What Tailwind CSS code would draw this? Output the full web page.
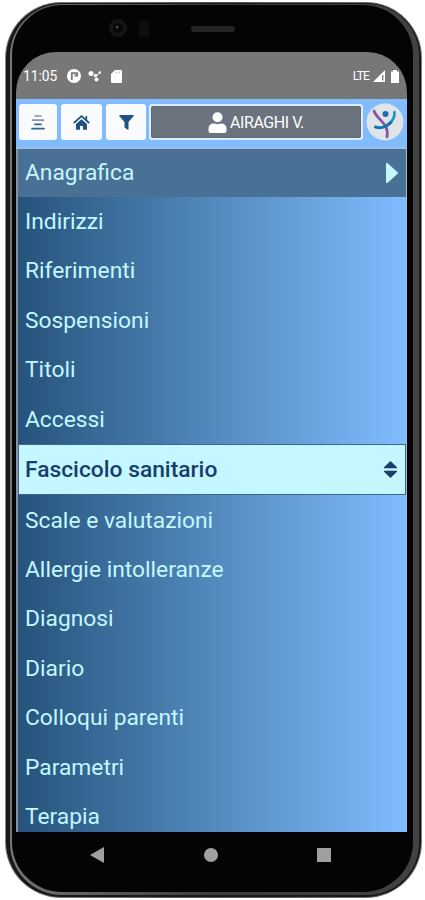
<!DOCTYPE html>
<html lang="it">
<head>
    <meta charset="UTF-8">
    <meta name="viewport" content="width=device-width, initial-scale=1.0">
    <title>Fascicolo sanitario</title>
    <script src="https://cdn.jsdelivr.net/npm/@tailwindcss/browser@4"></script>
</head>
<body class="bg-white font-['Roboto',sans-serif]">

<div class="w-[425px] h-[900px] pl-[5px] pr-[3px] pt-[2px] pb-[2px] overflow-hidden">
    <!-- phone shell -->
    <div class="h-full rounded-[56px] bg-linear-to-r from-[#858585] via-[#555] to-[#777] p-px">
    <div class="h-full rounded-[55px] bg-[#181818] pt-px pb-[2px] pl-[4px] pr-[2px]">
    <div class="h-full rounded-[52px] bg-linear-to-r from-[#777] via-[#3c3c3c] to-[#424242] pt-px pb-[3px] pl-[2px] pr-[6px]">
    <div class="h-full rounded-[50px] bg-[#040406] pl-[5px] pr-[6px] pt-px flex flex-col">
        <div class="h-[46px] shrink-0 flex items-center pl-[91px]">
            <svg class="w-5 h-5 shrink-0" viewBox="0 0 20 20">
                <circle cx="10" cy="9" r="9" fill="#151518"/>
                <circle cx="10" cy="9" r="5" fill="#08080a"/>
                <circle cx="9" cy="8" r="1.500" fill="#44484c"/>
            </svg>
            <div class="w-[10px] h-4 ml-[11px] mb-px bg-[#0d0d0f]"></div>
            <div class="w-[44px] h-[6px] ml-[42px] rounded-full bg-[#242425]"></div>
        </div>

        <!-- screen -->
        <div class="w-[391px] h-[780px] shrink-0 ml-[-1px] rounded-t-[40px] overflow-hidden flex flex-col bg-[#777]">
            <div class="h-[47px] shrink-0 pl-[7px] pr-[8px] pt-px flex items-center text-white">
                <span class="text-[13.8px] w-[35px] whitespace-nowrap">11:05</span>
                <svg class="w-[14px] h-[14px] ml-[9px]" viewBox="0 0 14 14">
                    <circle cx="7" cy="7" r="7" fill="#fff"/>
                    <path d="M4.800 11V4.200h5.400v2.300H7.500" stroke="#777" stroke-width="1.800" fill="none"/>
                </svg>
                <svg class="w-[14px] h-[14px] ml-[7px]" viewBox="0 0 14 14" fill="#fff">
                    <circle cx="3" cy="4.500" r="2.500"/><circle cx="7.500" cy="6.500" r="1.700"/><circle cx="11.800" cy="3.500" r="1.200"/><circle cx="8.500" cy="10.500" r="2"/>
                    <path d="M8 7l4-3.500" stroke="#fff"/>
                </svg>
                <svg class="w-[11px] h-[13px] ml-[9px]" viewBox="0 0 11 13">
                    <path d="M4 0h6a1 1 0 0 1 1 1v11a1 1 0 0 1-1 1H1a1 1 0 0 1-1-1V4z" fill="#fff"/>
                    <path d="M4.500 1.500v2M6.500 1.500v2M8.500 1.500v2" stroke="#bbb" stroke-width=".8"/>
                </svg>
                <span class="ml-auto text-[12px] tracking-[-0.9px]">LTE</span>
                <svg class="w-3 h-3 ml-[4px]" viewBox="0 0 12 12">
                    <path d="M0 12L12 0v12z" fill="#fff"/>
                    <path d="M9.700 5v5.500" stroke="#777" stroke-width="1.300"/>
                </svg>
                <svg class="w-2 h-[13px] ml-[6px]" viewBox="0 0 8 13" fill="#fff">
                    <path d="M2 0h4v1.500H8V13H0V1.500h2z"/>
                </svg>
            </div>

            <div class="h-[50px] shrink-0 bg-[#80bcff] border-b-2 border-[#9dbfe4] pl-[3px] pt-[5px] flex items-start">
                <button class="w-[38px] h-9 rounded-[3px] bg-[#fafbfd] flex items-center justify-center">
                    <svg class="w-[14px] h-[15px]" viewBox="0 0 14 15" stroke-width="1.700" stroke-linecap="round">
                        <path d="M4 1h6M1.500 5.200h11" stroke="#8593ad"/>
                        <path d="M4 9.400h6M1 13.600h12" stroke="#33648f"/>
                    </svg>
                </button>
                <button class="w-[41px] h-9 ml-1 rounded-[3px] bg-[#fafbfd] flex items-center justify-center">
                    <svg class="w-[17px] h-[15px]" viewBox="0 0 17 15" fill="#1f5280">
                        <path d="M8.500 4.200L3 9v5.300a.5.500 0 0 0 .5.500H7V11h3v3.800h3.500a.5.500 0 0 0 .5-.5V9z"/>
                        <path d="M.8 8L8.500 1.200L16.200 8M13.300 1v4" fill="none" stroke="#1f5280" stroke-width="1.700"/>
                    </svg>
                </button>
                <button class="w-[40px] h-9 ml-1 rounded-[3px] bg-[#fafbfd] flex items-center justify-center">
                    <svg class="w-[15px] h-[15px]" viewBox="0 0 15 15" fill="#1f5280">
                        <path d="M.7 0h13.600a.6.600 0 0 1 .4 1L9.500 7v7.300a.5.500 0 0 1-.8.400L6 12.700a1 1 0 0 1-.5-.8V7L.3 1A.6.600 0 0 1 .7 0z"/>
                    </svg>
                </button>
                <div class="w-[214px] h-9 ml-[3px] rounded-[3px] border-2 border-[#e0edfc]">
                    <div class="h-full rounded-[2px] border border-[#616b78] bg-[#6b737e] flex items-center justify-center text-white">
                        <svg class="w-[19px] h-[21px]" viewBox="0 0 18 21" fill="#fff">
                            <circle cx="9" cy="5.200" r="5"/>
                            <path d="M5 11.500h1a7 7 0 0 0 6 0h1a5 5 0 0 1 5 5V19a2 2 0 0 1-2 2H2a2 2 0 0 1-2-2v-2.500a5 5 0 0 1 5-5z"/>
                        </svg>
                        <span class="ml-[3px] pt-px text-[16px] tracking-[-0.45px] whitespace-nowrap">AIRAGHI V.</span>
                    </div>
                </div>
                <svg class="w-[38px] h-[38px] ml-[3px] -mt-px shrink-0" viewBox="0 0 38 38" fill="none" stroke-linecap="round">
                    <circle cx="19" cy="19" r="18.500" fill="#dfe5e7"/>
                    <path d="M8 8C10 14 17 18 20 24C21.500 27 21.500 31 21 34" stroke="#8a50a5" stroke-width="2.700"/>
                    <path d="M20 23C25 20 29 15 28.500 9" stroke="#1e96c8" stroke-width="2.700"/>
                    <path d="M9.500 24C14 25.500 19 25 25 19.500" stroke="#1674ae" stroke-width="3"/>
                    <circle cx="19.500" cy="11" r="3" fill="#2268b2"/>
                </svg>
            </div>

            <!-- menu -->
            <div class="grow overflow-hidden border-l-2 border-r border-l-[#8794a3] border-r-[#a9bacb] bg-linear-to-r from-[#26537c] via-[#5389bd] to-[#80bcff] text-[22.8px] text-[#c3f8ff]">
                <div class="h-[48px] bg-[#487195] pl-[7px] pr-[8px] flex items-center justify-between">
                    <span>Anagrafica</span>
                    <svg class="w-3 h-5" viewBox="0 0 12 20"><path d="M0 1a1 1 0 0 1 1.700-.7L11.600 9.200a1 1 0 0 1 0 1.600L1.700 19.700A1 1 0 0 1 0 19z" fill="#c3f8ff"/></svg>
                </div>
                <div class="h-[49.4px] pl-[7px] pt-px flex items-center">Indirizzi</div>
                <div class="h-[49.4px] pl-[7px] pt-px flex items-center">Riferimenti</div>
                <div class="h-[49.4px] pl-[7px] pt-px flex items-center">Sospensioni</div>
                <div class="h-[49.4px] pl-[7px] pt-px flex items-center">Titoli</div>
                <div class="h-[49.4px] pl-[7px] pt-px flex items-center">Accessi</div>
                <div class="h-[51px] bg-[#c4f7ff] border border-[#386794] pl-[6px] pr-[8px] pt-px flex items-center justify-between font-medium text-[#173e6c]">
                    <span>Fascicolo sanitario</span>
                    <svg class="w-[13px] h-[17px]" viewBox="0 0 13 17" fill="#173e6c">
                        <path d="M6.500 0L13 6.300v.9H0v-.9zM0 9.800h13v.9L6.500 17L0 10.700z"/>
                    </svg>
                </div>
                <div class="h-[49.4px] pl-[7px] pt-[2px] flex items-center">Scale e valutazioni</div>
                <div class="h-[49.4px] pl-[7px] pt-[2px] flex items-center">Allergie intolleranze</div>
                <div class="h-[49.4px] pl-[7px] pt-[2px] flex items-center">Diagnosi</div>
                <div class="h-[49.4px] pl-[7px] pt-[2px] flex items-center">Diario</div>
                <div class="h-[49.4px] pl-[7px] pt-[2px] flex items-center">Colloqui parenti</div>
                <div class="h-[49.4px] pl-[7px] pt-[2px] flex items-center">Parametri</div>
                <div class="h-[49.4px] pl-[7px] pt-[2px] flex items-center">Terapia</div>
            </div>
        </div>

        <!-- android navigation -->
        <div class="h-[45px] shrink-0 flex items-center pl-[73px]">
            <svg class="w-[14px] h-4" viewBox="0 0 14 16" fill="#a0a0a0"><path d="M14 0v16L0 8z"/></svg>
            <div class="w-[14px] h-[14px] ml-[100px] rounded-full bg-[#a0a0a0]"></div>
            <div class="w-[14px] h-[14px] ml-[99px] bg-[#a0a0a0]"></div>
        </div>
    </div>
    </div>
    </div>
    </div>
</div>

</body>
</html>
